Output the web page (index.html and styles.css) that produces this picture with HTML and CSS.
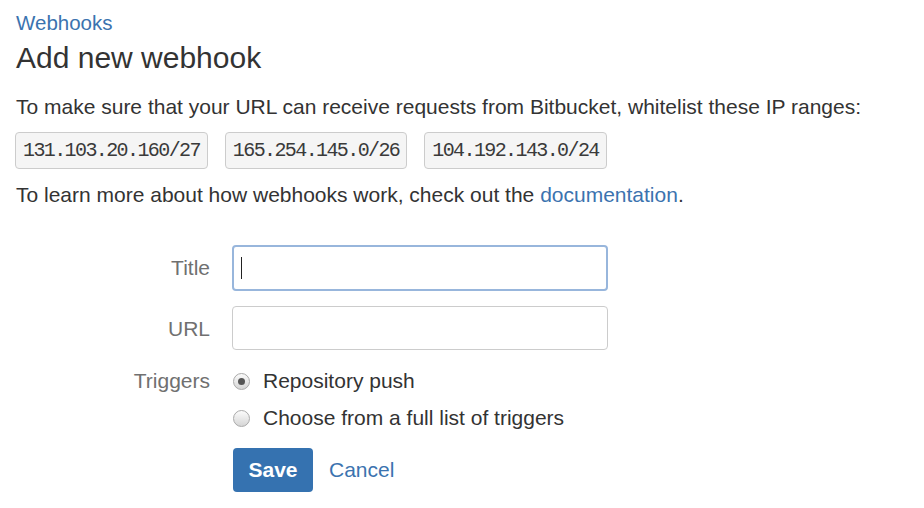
FILE: index.html
```html
<!DOCTYPE html>
<html>
<head>
<meta charset="utf-8">
<link rel="stylesheet" href="styles.css">
</head>
<body>
<div class="page">
  <a class="crumb" href="#">Webhooks</a>
  <h1 class="title">Add new webhook</h1>
  <p class="text">To make sure that your URL can receive requests from Bitbucket, whitelist these IP ranges:</p>
  <div class="ips">
    <code class="ip">131.103.20.160/27</code>
    <code class="ip">165.254.145.0/26</code>
    <code class="ip">104.192.143.0/24</code>
  </div>
  <p class="text">To learn more about how webhooks work, check out the <a href="#" class="link">documentation</a>.</p>
  <form class="form">
    <label class="label label-input">Title</label>
    <div class="input focused"><span class="caret"></span></div>
    <label class="label label-input">URL</label>
    <div class="input"></div>
    <label class="label label-triggers">Triggers</label>
    <div class="radios">
      <div class="radio-row"><span class="radio checked"></span><span class="radio-text">Repository push</span></div>
      <div class="radio-row"><span class="radio"></span><span class="radio-text">Choose from a full list of triggers</span></div>
    </div>
    <div></div>
    <div class="actions">
      <button type="button" class="btn-save">Save</button>
      <a href="#" class="link cancel">Cancel</a>
    </div>
  </form>
</div>
</body>
</html>
```

FILE: styles.css
```css
html, body {
  margin: 0;
  padding: 0;
  background: #fff;
}
body {
  font-family: "Liberation Sans", Arial, sans-serif;
  color: #333;
  font-size: 21px;
}
.page {
  padding: 11px 16px 0 15px;
  display: flex;
  flex-direction: column;
  align-items: flex-start;
}
.crumb {
  color: #3b73af;
  text-decoration: none;
  font-size: 20.5px;
  line-height: 24px;
  margin-left: 1px;
}
.title {
  font-size: 30px;
  font-weight: normal;
  margin: 5px 0 0 1px;
  line-height: 36px;
  color: #333;
}
.text {
  margin: 18px 0 0 1px;
  line-height: 26px;
}
.link {
  color: #3b73af;
  text-decoration: none;
}
.ips {
  display: flex;
  gap: 17px;
  margin-top: 12px;
}
.ip {
  font-family: "Liberation Mono", monospace;
  font-size: 20px;
  letter-spacing: -1.6px;
  background: #f5f5f5;
  border: 1px solid #ccc;
  border-radius: 4px;
  height: 37px;
  box-sizing: border-box;
  padding: 0 7px 0 7px;
  display: flex;
  align-items: center;
  color: #3a3a3a;
}
.ips + .text {
  margin-top: 13px;
}
.form {
  display: grid;
  grid-template-columns: 195px 376px;
  column-gap: 22px;
  margin-top: 37px;
  align-items: start;
}
.label {
  text-align: right;
  color: #707070;
  font-size: 21px;
}
.label-input {
  line-height: 46px;
}
.input {
  height: 44px;
  box-sizing: border-box;
  border: 1px solid #ccc;
  border-radius: 4px;
  background: #fff;
  margin-bottom: 15px;
  display: flex;
  align-items: center;
  padding-left: 9px;
}
.input.focused {
  height: 46px;
  border: 2px solid #98b6dc;
  padding-left: 7px;
}
.caret {
  width: 1px;
  height: 22px;
  background: #222;
}
.label-triggers {
  line-height: 26px;
  margin-top: 3px;
}
.radios {
  display: flex;
  flex-direction: column;
  gap: 11px;
  margin-top: 3px;
}
.radio-row {
  display: flex;
  align-items: center;
  gap: 13px;
  height: 26px;
}
.radio {
  width: 17px;
  height: 17px;
  border-radius: 50%;
  border: 1px solid #aaa;
  background: linear-gradient(#fbfbfb, #d6d6d6);
  box-sizing: border-box;
  position: relative;
  margin-left: 1px;
}
.radio.checked::after {
  content: "";
  position: absolute;
  left: 4px;
  top: 4px;
  width: 7px;
  height: 7px;
  border-radius: 50%;
  background: #555;
}
.radio-text {
  color: #333;
}
.actions {
  display: flex;
  align-items: center;
  gap: 16px;
  margin-top: 17px;
}
.btn-save {
  width: 80px;
  height: 44px;
  margin-left: 1px;
  background: #3572b0;
  color: #fff;
  border: none;
  border-radius: 4px;
  font-family: "Liberation Sans", Arial, sans-serif;
  font-weight: bold;
  font-size: 21px;
  padding: 0;
}
.cancel {
  font-size: 21px;
}
```
